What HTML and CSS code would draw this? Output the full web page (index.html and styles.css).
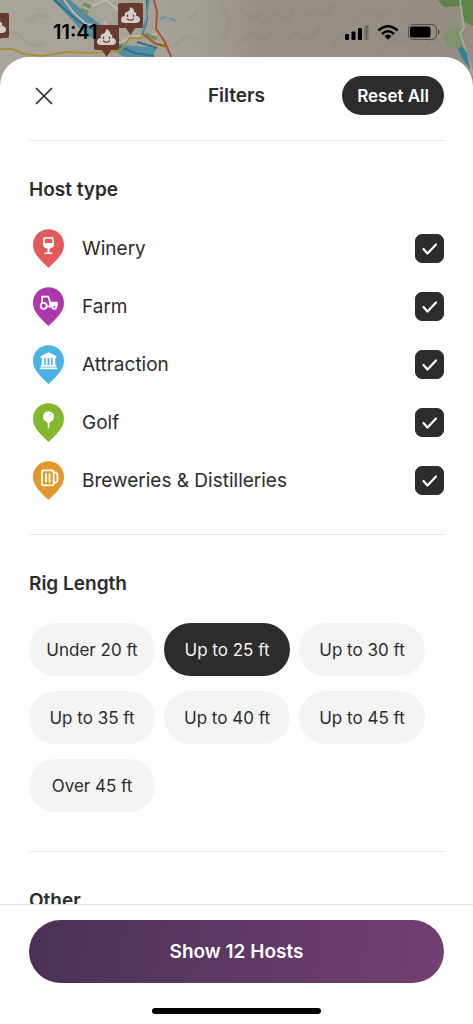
FILE: index.html
```html
<!DOCTYPE html>
<html lang="en">
<head>
<meta charset="utf-8">
<meta name="viewport" content="width=device-width, initial-scale=1">
<title>Filters</title>
<link rel="stylesheet" href="styles.css">
</head>
<body>
<div class="screen">
  <svg class="map" viewBox="0 0 473 110" preserveAspectRatio="xMidYMin slice" aria-hidden="true">
    <defs>
      <linearGradient id="land" x1="0" x2="1" y1="0" y2="0">
        <stop offset="0" stop-color="#aaa59b"/><stop offset=".4" stop-color="#a5a096"/><stop offset=".55" stop-color="#969084"/><stop offset="1" stop-color="#938e81"/>
      </linearGradient>
      <filter id="soft"><feGaussianBlur stdDeviation="1"/></filter>
      <g id="dump-pin">
        <path d="M2 0h21q2 0 2 2v21q0 2-2 2h-6l-4.500 7-4.500-7H2q-2 0-2-2V2q0-2 2-2z" fill="#673a2c"/>
        <path d="M12 4c3 1 5 3 4 5 2 0 3 2 2 4 3 0 4 2 4 4s-2 3-4 3H7c-3 0-4-1-4-3s1-4 4-4c-1-2 0-4 2-4 2-1 3-2 3-5z" fill="#d0cdca"/>
        <path d="M9.500 12v1.500M15.500 12v1.500M9.500 16q3 2.500 6 0" fill="none" stroke="#673a2c" stroke-width="1.200" stroke-linecap="round"/>
      </g>
    </defs>
    <rect width="473" height="110" fill="url(#land)"/>
    <g filter="url(#soft)" fill="none" stroke="#857f71" stroke-width="2" opacity=".35">
      <path d="M0 36q12-9 22 2t24 5M28 22q10-12 22-4M174 46l14-10 12 4M188 20l10-9M222 6l8 14-6 20M240 8l12 10 14-6M236 46l16-14 10 8 14-10M262 24l12-12 14 8 8-14M284 44l10-12 14 8 12-12M300 20l14-10 10 6 12-12M334 46l8-14 16 8 10-12M352 22l16-12 10 8 14-10M382 50l12-12 10 6 16-10M404 20l12-10 14 8M424 52l6-12 10 4"/>
    </g>
    <path d="M438 0l6 7 16-1 4 16 9 4V0z" fill="#5d8549"/>
    <path d="M443 38l8-12 10 2 4 12-5 10-10-3z" fill="#7f926b"/>
    <path d="M460 0l4 28-4 5 7 22 6 20" fill="none" stroke="#a5aa9c" stroke-width="2"/>
    <path d="M458 49l4-3 5 7 3 16-8-11z" fill="#377f97"/>
    <path d="M53 0h18l16 14 14 11 14 7 8 13 34 3-5 9h-28l-16-10-22-12-14-15z" fill="#528da0"/>
    <path d="M70 0h34l14 14-14 12-17-12z" fill="#a8a398"/>
    <path d="M54 0l24 21 17 9 15 13 25 10 19 3M137 42l20 6M147 0v20l-5 15" fill="none" stroke="#32718b" stroke-width="2"/>
    <path d="M64 0l10 13 12 11 8 1M84 8l10-3 12-5 13 11M104 21l16 22M118 44l12-7 27-3" fill="none" stroke="#beb9b0" stroke-width="2"/>
    <path d="M83 4l8 3M81 9l7 4M145 34l12 5" stroke="#719262" stroke-width="4"/>
    <path d="M149 0l-3 20-4 13M160 19l6-2M169 18l7 3" fill="none" stroke="#5b96a9" stroke-width="2"/>
    <path d="M0 49h12l12 5 18 2 24-4 25 1 29-2 10-13h10l3-3 13 9 12 4" fill="none" stroke="#a98c38" stroke-width="2"/>
    <path d="M154 0l3 12-1 17 9 13 7 17M143 34l13 10 10 2" fill="none" stroke="#a35532" stroke-width="2"/>
    <use href="#dump-pin" x="-16" y="13"/>
    <use href="#dump-pin" x="94" y="25"/>
    <use href="#dump-pin" x="118" y="3"/>
  </svg>

  <div class="status">
    <span class="time">11:41</span>
    <svg class="signals" width="98" height="18" viewBox="0 0 98 18" aria-hidden="true">
      <rect x="0" y="11" width="4" height="6" rx="1"/><rect x="6.500" y="8.500" width="4" height="8.500" rx="1"/><rect x="13" y="5" width="4" height="12" rx="1"/><rect x="19.500" y="2" width="4" height="15" rx="1" opacity=".25"/>
      <g fill="none" stroke="#000" stroke-width="2.600"><path d="M33.500 7.500q9.500-8.500 19 0"/><path d="M37 11q6-5.500 12 0"/></g>
      <path d="M39.500 13q3.500-3 7 0L43 16.700z"/>
      <rect x="63.500" y="1.500" width="28" height="15" rx="4.500" fill="none" stroke="#000" opacity=".45"/><rect x="65" y="3.500" width="20.500" height="11" rx="2.500"/><path d="M93 6.500q3 2.500 0 5z" opacity=".5"/>
    </svg>
  </div>

  <main class="sheet">
    <header class="header">
      <button class="close" type="button" aria-label="Close">
        <svg width="18" height="18" viewBox="0 0 18 18" aria-hidden="true"><path d="M1.500 1.500l15 15M16.500 1.500l-15 15" fill="none" stroke="#2c2c2c" stroke-width="1.700" stroke-linecap="round"/></svg>
      </button>
      <h1 class="title">Filters</h1>
      <button class="reset" type="button">Reset All</button>
    </header>

    <div class="content">
      <section class="section hosts">
        <h2 class="heading">Host type</h2>
        <label class="row">
          <svg class="pin" viewBox="0 0 32 40" aria-hidden="true"><path class="winery" d="M16 0C7 0 0 7 0 16c0 10 8 16 16 24 8-8 16-14 16-24C32 7 25 0 16 0z"/><path d="M11 8.500h10l.8 6.500c0 3.200-2.300 5-5.800 5s-5.800-1.800-5.800-5zM15 19h2v5h3v1.800h-8V24h3z" fill="#fff"/><path class="winery" d="M12.400 10h7.200l.5 4.300h-8.200z"/></svg>
          <span class="name">Winery</span><input class="check" type="checkbox" checked>
        </label>
        <label class="row">
          <svg class="pin" viewBox="0 0 32 40" aria-hidden="true"><path class="farm" d="M16 0C7 0 0 7 0 16c0 10 8 16 16 24 8-8 16-14 16-24C32 7 25 0 16 0z"/><g fill="none" stroke="#fff" stroke-width="1.800"><circle cx="11" cy="19.300" r="3.100"/><path d="M9.500 16V9.800h6.300l2 6.200V20h-3.500"/><circle cx="22" cy="20.500" r="1.900"/></g><path d="M17 15h8.500v5h-1a2.700 2.700 0 0 0-4.500-.5L19.500 21H17z" fill="#fff"/></svg>
          <span class="name">Farm</span><input class="check" type="checkbox" checked>
        </label>
        <label class="row">
          <svg class="pin" viewBox="0 0 32 40" aria-hidden="true"><path class="attraction" d="M16 0C7 0 0 7 0 16c0 10 8 16 16 24 8-8 16-14 16-24C32 7 25 0 16 0z"/><path d="M16 7.300l8 4v2H8v-2zM9 13h2.700v8H9zM13.300 13H15v8h-1.700zM17 13h1.700v8H17zM20.300 13H23v8h-2.700zM8 20.500h16v1.700H8zM7 23.200h18V25H7z" fill="#fff"/></svg>
          <span class="name">Attraction</span><input class="check" type="checkbox" checked>
        </label>
        <label class="row">
          <svg class="pin" viewBox="0 0 32 40" aria-hidden="true"><path class="golf" d="M16 0C7 0 0 7 0 16c0 10 8 16 16 24 8-8 16-14 16-24C32 7 25 0 16 0z"/><circle cx="16" cy="14" r="5.700" fill="#fff"/><path d="M14 19.300h4l-1.200 1.700v5h-1.600v-5z" fill="#fff"/><circle class="golf" cx="18" cy="11.800" r=".8"/></svg>
          <span class="name">Golf</span><input class="check" type="checkbox" checked>
        </label>
        <label class="row">
          <svg class="pin" viewBox="0 0 32 40" aria-hidden="true"><path class="brewery" d="M16 0C7 0 0 7 0 16c0 10 8 16 16 24 8-8 16-14 16-24C32 7 25 0 16 0z"/><g fill="none" stroke="#fff" stroke-width="1.900"><rect x="9.300" y="9.500" width="12" height="15.500" rx="1.500"/><path d="M13.500 12.500v9.500M17.100 12.500v9.500M21.500 11.800h2l1.700 1.700v7l-1.700 1.700h-2"/></g></svg>
          <span class="name">Breweries &amp; Distilleries</span><input class="check" type="checkbox" checked>
        </label>
      </section>

      <section class="section rigs">
        <h2 class="heading">Rig Length</h2>
        <div class="chips">
          <button class="chip" type="button">Under 20 ft</button>
          <button class="chip selected" type="button" aria-pressed="true">Up to 25 ft</button>
          <button class="chip" type="button">Up to 30 ft</button>
          <button class="chip" type="button">Up to 35 ft</button>
          <button class="chip" type="button">Up to 40 ft</button>
          <button class="chip" type="button">Up to 45 ft</button>
          <button class="chip" type="button">Over 45 ft</button>
        </div>
      </section>

      <section class="section">
        <h2 class="heading">Other</h2>
      </section>
    </div>

    <footer class="footer">
      <button class="show" type="button">Show 12 Hosts</button>
      <div class="home"></div>
    </footer>
  </main>
</div>
</body>
</html>
```
FILE: styles.css
```css
* { box-sizing: border-box; }

body {
  margin: 0;
  font-family: Inter, "Liberation Sans", sans-serif;
  font-optical-sizing: none;
  color: #2c2c2c;
}

button {
  border: 0;
  padding: 0;
  font: inherit;
  font-optical-sizing: none;
  color: inherit;
  background: none;
  cursor: pointer;
}

.screen {
  position: relative;
  display: flex;
  flex-direction: column;
  height: 100vh;
  overflow: hidden;
}

.map {
  position: absolute;
  top: 0;
  left: 0;
  width: 100%;
  height: 110px;
}

.status {
  position: relative;
  display: flex;
  align-items: center;
  justify-content: space-between;
  height: 57px;
  padding: 6px 30px 0 53px;
  color: #000;
}

.time {
  font-size: 20px;
  font-weight: 600;
}

.sheet {
  position: relative;
  display: flex;
  flex: 1;
  flex-direction: column;
  min-height: 0;
  border-radius: 29px 29px 0 0;
  background: #fefefe;
}

.header {
  display: grid;
  grid-template-columns: 1fr auto 1fr;
  align-items: center;
  margin: 0 29px;
  padding: 19px 0 25px;
  border-bottom: 1px solid #e6e6e6;
}

.close {
  display: flex;
  justify-self: start;
  padding: 6px;
}

.title {
  margin: 0;
  font-size: 19px;
  font-weight: 600;
  line-height: 24px;
}

.reset {
  justify-self: end;
  height: 39px;
  padding: 0 15px;
  border-radius: 20px;
  background: #2c2c2c;
  color: #fff;
  font-size: 17px;
  font-weight: 600;
}

.content {
  flex: 1;
  min-height: 0;
  padding: 0 29px;
  overflow: hidden;
}

.section { padding-top: 37px; }

.hosts {
  padding-bottom: 25px;
  border-bottom: 1px solid #e6e6e6;
}

.rigs {
  padding-bottom: 39px;
  border-bottom: 1px solid #e6e6e6;
}

.heading {
  margin: 0;
  font-size: 19px;
  font-weight: 600;
  line-height: 24px;
}

.hosts .heading { margin-bottom: 17px; }
.rigs .heading { margin-bottom: 27px; }

.row {
  display: flex;
  align-items: center;
  height: 58px;
  padding-left: 4px;
  cursor: pointer;
}

.pin {
  width: 31px;
  height: 39px;
}

.winery { fill: #e15b5b; }
.farm { fill: #af37ac; }
.attraction { fill: #4bb2e6; }
.golf { fill: #84b82f; }
.brewery { fill: #e2982f; }

.name {
  flex: 1;
  padding-left: 18px;
  font-size: 19px;
}

.check {
  appearance: none;
  width: 29px;
  height: 29px;
  margin: 0;
  border: 1px solid #2c2c2c;
  border-radius: 7px;
}

.check:checked {
  background: #2c2c2c url("data:image/svg+xml,%3Csvg xmlns='http://www.w3.org/2000/svg' viewBox='0 0 27 27'%3E%3Cpath d='M7.500 14l4 4.500 8.500-9' fill='none' stroke='white' stroke-width='2.200' stroke-linecap='round' stroke-linejoin='round'/%3E%3C/svg%3E") center / 27px no-repeat;
}

.chips {
  display: flex;
  flex-wrap: wrap;
  gap: 15px 9px;
}

.chip {
  width: 126px;
  height: 53px;
  border-radius: 27px;
  background: #f4f4f2;
  font-size: 17px;
}

.chip.selected {
  background: #2c2c2c;
  color: #f4f4f2;
}

.footer {
  display: flex;
  flex-direction: column;
  align-items: center;
  gap: 25px;
  padding: 15px 29px 10px;
  border-top: 1px solid #e6e6e6;
}

.show {
  width: 100%;
  height: 63px;
  border-radius: 32px;
  background: linear-gradient(100deg, #4a3156, #733f73);
  color: #fff;
  font-size: 19px;
  font-weight: 600;
}

.home {
  width: 169px;
  height: 6px;
  border-radius: 3px;
  background: #000;
}
```
